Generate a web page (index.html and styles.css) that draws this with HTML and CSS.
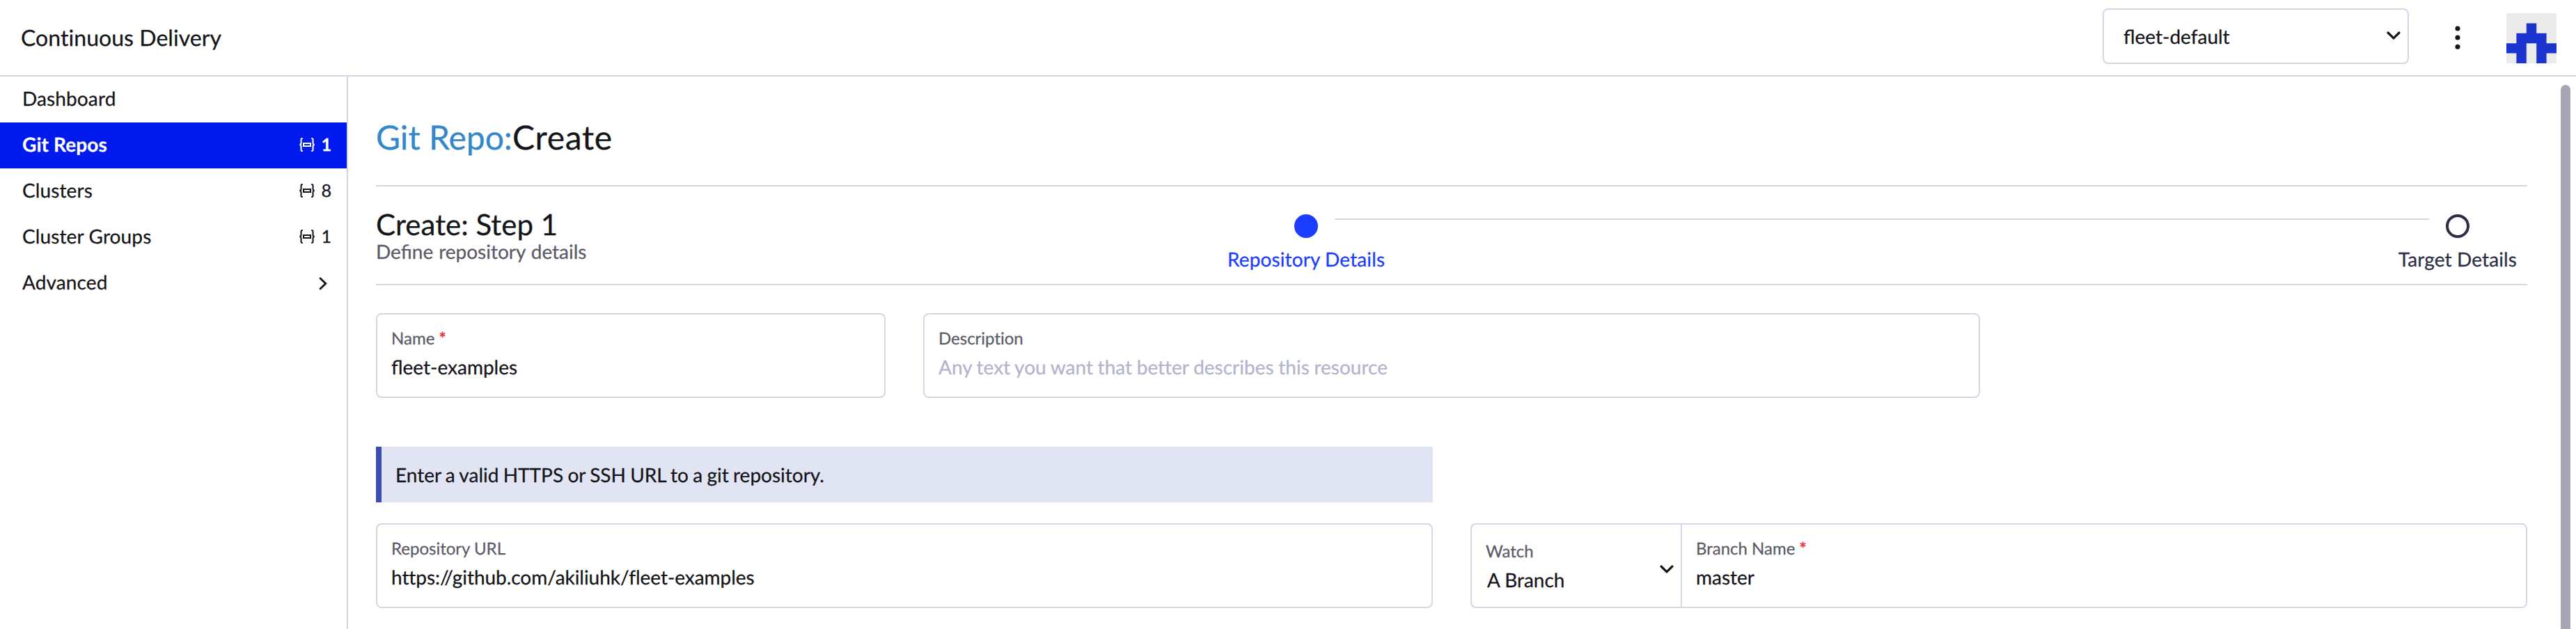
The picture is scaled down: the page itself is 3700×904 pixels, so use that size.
FILE: index.html
```html
<!DOCTYPE html>
<html lang="en">
<head>
<meta charset="utf-8">
<title>Continuous Delivery</title>
<link rel="stylesheet" href="styles.css">
</head>
<body>
<svg class="defs" width="0" height="0">
  <symbol id="ns" viewBox="0 0 22 20">
    <path d="M4.800 1H4Q2.500 1 2.500 3V7.500Q2.500 9.500 0.500 10Q2.500 10.500 2.500 12.500V17Q2.500 19 4 19H4.800M17.200 1H18Q19.500 1 19.500 3V7.500Q19.500 9.500 21.500 10Q19.500 10.500 19.500 12.500V17Q19.500 19 18 19H17.200" fill="none" stroke="currentColor" stroke-width="2"/>
    <rect x="6" y="8" width="10" height="4" fill="none" stroke="currentColor" stroke-width="2"/>
  </symbol>
  <symbol id="down" viewBox="0 0 20 12">
    <path d="M2 2L10 9.800L18 2" fill="none" stroke="currentColor" stroke-width="3.200" stroke-linecap="round"/>
  </symbol>
</svg>
<header class="header">
  <div class="product">Continuous Delivery</div>
  <div class="workspace"><span>fleet-default</span><svg class="chev"><use href="#down"/></svg></div>
  <svg class="dots" viewBox="0 0 8 34"><circle cx="4" cy="4" r="3.500"/><circle cx="4" cy="17" r="3.500"/><circle cx="4" cy="30.300" r="3.500"/></svg>
  <svg class="avatar" viewBox="0 0 5 5"><path fill="#ebebeb" d="M0 0H5V5H0z"/><path fill="#1c34d0" d="M2 1H3V2H4V3H5V4H4V5H3V3H2V5H1V4H0V3H1V2H2z"/></svg>
</header>
<div class="body">
  <nav class="side">
    <a class="row"><span>Dashboard</span></a>
    <a class="row active"><span>Git Repos</span><span class="count"><svg class="ns"><use href="#ns"/></svg>1</span></a>
    <a class="row"><span>Clusters</span><span class="count"><svg class="ns"><use href="#ns"/></svg>8</span></a>
    <a class="row"><span>Cluster Groups</span><span class="count"><svg class="ns"><use href="#ns"/></svg>1</span></a>
    <a class="row"><span>Advanced</span><svg class="expand" viewBox="0 0 12 19"><path d="M2 2L9.800 9.500L2 17" fill="none" stroke="currentColor" stroke-width="2.800" stroke-linecap="round"/></svg></a>
  </nav>
  <main class="main">
    <h1 class="title"><span class="type">Git Repo:</span>Create</h1>
    <section class="wizard">
      <div class="intro">
        <h2>Create: Step 1</h2>
        <p>Define repository details</p>
      </div>
      <div class="steps">
        <div class="step current"><i class="dot"></i><span>Repository Details</span></div>
        <div class="line"></div>
        <div class="step"><i class="dot"></i><span>Target Details</span></div>
      </div>
    </section>
    <div class="fields">
      <div class="field name"><label>Name <b>*</b></label><div class="value">fleet-examples</div></div>
      <div class="field description"><label>Description</label><div class="value placeholder">Any text you want that better describes this resource</div></div>
    </div>
    <div class="banner">Enter a valid HTTPS or SSH URL to a git repository.</div>
    <div class="fields repo">
      <div class="field url"><label>Repository URL</label><div class="value">https://github.com/akiliuhk/fleet-examples</div></div>
      <div class="group">
        <div class="field watch"><div><label>Watch</label><div class="value">A Branch</div></div><svg class="chev"><use href="#down"/></svg></div>
        <div class="field branch"><label>Branch Name <b>*</b></label><div class="value">master</div></div>
      </div>
    </div>
  </main>
  <div class="scroll"><div class="thumb"></div></div>
</div>
</body>
</html>
```
FILE: styles.css
```css
* { box-sizing: border-box; }
body {
  margin: 0;
  height: 904px;
  overflow: hidden;
  display: flex;
  flex-direction: column;
  background: #fff;
  color: #141419;
  font: 28px/34px Lato, "Liberation Sans", sans-serif;
  text-rendering: geometricPrecision;
  -webkit-text-stroke: 0.25px currentColor;
}
.defs { position: absolute; }
h1, h2, p { margin: 0; font-weight: 400; }

.header {
  height: 110px;
  flex: none;
  display: flex;
  align-items: flex-start;
  border-bottom: 2px solid #d4d7e4;
}
.product { flex: 1; padding: 34px 0 0 30px; font-size: 32px; line-height: 40px; letter-spacing: 0.05px; }
.workspace {
  width: 440px;
  height: 80px;
  margin-top: 12px;
  padding: 0 10px 0 28px;
  display: flex;
  align-items: center;
  justify-content: space-between;
  border: 2px solid #d4d7e4;
  border-radius: 8px;
}
.workspace .chev { margin-bottom: 2px; }
.chev { width: 20px; height: 12px; flex: none; }
.dots { width: 8px; height: 34px; margin: 37px 0 0 66px; fill: #141419; }
.avatar { width: 72px; height: 72px; margin: 19px 28px 0 66px; }

.body { flex: 1; display: flex; min-height: 0; }
.side { width: 500px; flex: none; border-right: 2px solid #d4d7e4; }
.row {
  height: 66px;
  padding: 0 22px 4px 32px;
  display: flex;
  align-items: center;
  justify-content: space-between;
  letter-spacing: 0.12px;
}
.active { background: #001aee; color: #fff; font-weight: 700; }
.count { display: flex; align-items: center; gap: 9px; padding-top: 2px; font-size: 25.2px; letter-spacing: 0; }
.ns { width: 22px; height: 20px; }
.expand { width: 12px; height: 19px; margin: 4px 6px 0 0; }

.main { width: 3090px; margin-left: 40px; flex: none; }
.title { height: 158px; padding-top: 59px; font-size: 48px; line-height: 58px; letter-spacing: 0.7px; border-bottom: 2px solid #d4d7e4; }
.type { color: #3388cc; letter-spacing: 0; }
.wizard { height: 142px; display: flex; border-bottom: 2px solid #d4d7e4; }
.intro { width: 1223px; padding-top: 28px; }
.intro h2 { font-size: 42px; line-height: 52px; }
.intro p { line-height: 30px; color: #5b5b66; margin-top: -2px; word-spacing: 0.8px; }
.steps { flex: 1; display: flex; padding-right: 15px; }
.step { flex: none; display: flex; flex-direction: column; align-items: center; gap: 13px; padding-top: 40px; color: #2c2e45; letter-spacing: 0.12px; }
.dot { width: 34px; height: 34px; border: 4px solid #2c2e45; border-radius: 50%; }
.current { color: #1b3dff; }
.current .dot { background: #1b3dff; border-color: #1b3dff; }
.line { flex: 1; height: 2px; margin: 46px -44px 0 -72px; background: #d4d7e4; }

.fields { display: flex; gap: 54px; margin-top: 40px; }
.field { height: 122px; padding: 20px 20px 0; border: 2px solid #d4d7e4; border-radius: 8px; }
.field label { display: block; font-size: 24px; line-height: 30px; color: #5b5b66; font-variant-ligatures: none; }
.field b { color: #f03040; font-weight: 700; }
.value { margin-top: 8px; line-height: 34px; }
.placeholder { color: #b2b4cc; font-variant-ligatures: none; word-spacing: -0.5px; }
.name { width: 732px; }
.description { width: 1518px; }
.banner {
  width: 1518px;
  height: 80px;
  margin-top: 70px;
  padding: 23px 20px 0;
  background: #e1e4f3;
  border-left: 8px solid #3a4eb1;
  word-spacing: -0.9px;
}
.repo { margin-top: 30px; }
.url { width: 1518px; }
.url .value { letter-spacing: -0.05px; font-variant-ligatures: common-ligatures; }
.group { flex: 1; display: flex; }
.watch { width: 302px; padding: 24px 10px 0 20px; display: flex; justify-content: space-between; border-radius: 8px 0 0 8px; border-right: 0; }
.watch .value { padding-left: 2px; }
.watch .chev { margin-top: 34px; }
.branch { flex: 1; border-radius: 0 8px 8px 0; }

.scroll { width: 70px; padding: 12px 8px 0 48px; display: flex; }
.thumb { width: 14px; background: #a7a6b4; border-radius: 7px 7px 0 0; }
```
